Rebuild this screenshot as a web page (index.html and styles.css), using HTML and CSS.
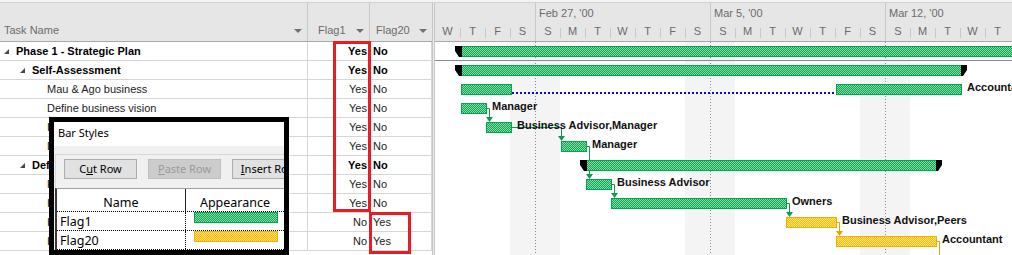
FILE: index.html
```html
<!DOCTYPE html>
<html lang="en">
<head>
  <meta charset="UTF-8" />
  <meta name="viewport" content="width=device-width, initial-scale=1.0"/>
  <title>Gantt Chart - Bar Styles</title>
  <link rel="stylesheet" href="styles.css">
</head>
<body>
  <div class="view">
    <div class="sheet">
      <div class="sheet-head">
        <div class="hcell col-name">Task Name<span class="drop"></span></div>
        <div class="hcell col-flag1">Flag1<span class="drop"></span></div>
        <div class="hcell col-flag20">Flag20<span class="drop"></span></div>
      </div>

      <div class="row bold">
        <div class="cell lvl1"><span class="tri"></span>Phase 1 - Strategic Plan</div>
        <div class="cell flag1">Yes</div>
        <div class="cell flag20">No</div>
      </div>
      <div class="row bold">
        <div class="cell lvl2"><span class="tri"></span>Self-Assessment</div>
        <div class="cell flag1">Yes</div>
        <div class="cell flag20">No</div>
      </div>
      <div class="row">
        <div class="cell lvl3">Mau &amp; Ago business</div>
        <div class="cell flag1">Yes</div>
        <div class="cell flag20">No</div>
      </div>
      <div class="row">
        <div class="cell lvl3">Define business vision</div>
        <div class="cell flag1">Yes</div>
        <div class="cell flag20">No</div>
      </div>
      <div class="row">
        <div class="cell lvl3">Identify available skills, information and support</div>
        <div class="cell flag1">Yes</div>
        <div class="cell flag20">No</div>
      </div>
      <div class="row">
        <div class="cell lvl3">Decide whether to proceed</div>
        <div class="cell flag1">Yes</div>
        <div class="cell flag20">No</div>
      </div>
      <div class="row bold">
        <div class="cell lvl2"><span class="tri"></span>Define the Opportunity</div>
        <div class="cell flag1">Yes</div>
        <div class="cell flag20">No</div>
      </div>
      <div class="row">
        <div class="cell lvl3">Research the market and competition</div>
        <div class="cell flag1">Yes</div>
        <div class="cell flag20">No</div>
      </div>
      <div class="row">
        <div class="cell lvl3">Interview owners of similar businesses</div>
        <div class="cell flag1">Yes</div>
        <div class="cell flag20">No</div>
      </div>
      <div class="row">
        <div class="cell lvl3">Identify needed resources</div>
        <div class="cell flag1">No</div>
        <div class="cell flag20">Yes</div>
      </div>
      <div class="row">
        <div class="cell lvl3">Identify operating cost elements</div>
        <div class="cell flag1">No</div>
        <div class="cell flag20">Yes</div>
      </div>
    </div>

    <div class="splitter"></div>

    <div class="chart">
      <div class="timescale">
        <div class="weeks">
          <div class="week lead"></div>
          <div class="week">Feb 27, '00</div>
          <div class="week">Mar 5, '00</div>
          <div class="week">Mar 12, '00</div>
        </div>
        <div class="days">
          <span class="day first">W</span><span class="day">T</span><span class="day">F</span><span class="day">S</span>
          <span class="day sun">S</span><span class="day">M</span><span class="day">T</span><span class="day">W</span><span class="day">T</span><span class="day">F</span><span class="day">S</span>
          <span class="day sun">S</span><span class="day">M</span><span class="day">T</span><span class="day">W</span><span class="day">T</span><span class="day">F</span><span class="day">S</span>
          <span class="day sun">S</span><span class="day">M</span><span class="day">T</span><span class="day">W</span><span class="day">T</span>
        </div>
      </div>

      <svg class="bars" width="577" height="213" viewBox="435 42 577 213">
        <defs>
          <pattern id="green" width="2" height="2" patternUnits="userSpaceOnUse">
            <rect width="2" height="2" fill="#0fa650"/>
            <rect width="1" height="1" fill="#86dba9"/>
            <rect x="1" y="1" width="1" height="1" fill="#86dba9"/>
          </pattern>
          <pattern id="yellow" width="2" height="2" patternUnits="userSpaceOnUse">
            <rect width="2" height="2" fill="#ffbb00"/>
            <rect width="1" height="1" fill="#ffe07a"/>
            <rect x="1" y="1" width="1" height="1" fill="#ffe07a"/>
          </pattern>
        </defs>

        <!-- non-working days -->
        <rect x="510" y="42" width="50" height="213" fill="#f4f4f4"/>
        <rect x="685" y="42" width="50" height="213" fill="#f4f4f4"/>
        <rect x="860" y="42" width="50" height="213" fill="#f4f4f4"/>
        <g stroke="#8c8c8c" stroke-dasharray="1 2">
          <line x1="535.5" y1="42" x2="535.5" y2="255"/>
          <line x1="710.5" y1="42" x2="710.5" y2="255"/>
          <line x1="885.5" y1="42" x2="885.5" y2="255"/>
        </g>
        <line x1="435" y1="60.5" x2="1012" y2="60.5" stroke="#8a8a8a"/>

        <!-- links -->
        <g fill="none" stroke="#0f9a4e">
          <path d="M486 108.5H489.5V118"/>
          <path d="M511 127.5H561.5V137"/>
          <path d="M586 146.5H589.5V175"/>
          <path d="M611 184.5H614.5V194"/>
          <path d="M786 203.5H789.5V213"/>
        </g>
        <g fill="#0f9a4e">
          <polygon points="486,117 493,117 489.5,122"/>
          <polygon points="558,136 565,136 561.5,141"/>
          <polygon points="586,174 593,174 589.5,179"/>
          <polygon points="611,193 618,193 614.5,198"/>
          <polygon points="786,212 793,212 789.5,217"/>
        </g>
        <g fill="none" stroke="#e3a600">
          <path d="M836 222.5H839.5V232"/>
          <path d="M936 241.5H939.5V255"/>
        </g>
        <polygon points="836,231 843,231 839.5,236" fill="#e3a600"/>

        <!-- bars -->
        <g fill="url(#green)" stroke="#00a651">
          <rect x="461.5" y="46.5" width="560" height="10"/>
          <rect x="461.5" y="65.5" width="500" height="10"/>
          <rect x="461.5" y="84.5" width="50" height="10"/>
          <rect x="836.5" y="84.5" width="125" height="10"/>
          <rect x="461.5" y="103.5" width="25" height="10"/>
          <rect x="486.5" y="122.5" width="25" height="10"/>
          <rect x="561.5" y="141.5" width="25" height="10"/>
          <rect x="586.5" y="160.5" width="350" height="10"/>
          <rect x="586.5" y="179.5" width="25" height="10"/>
          <rect x="611.5" y="198.5" width="175" height="10"/>
        </g>
        <g fill="url(#yellow)" stroke="#f0b000">
          <rect x="786.5" y="217.5" width="50" height="10"/>
          <rect x="836.5" y="236.5" width="100" height="10"/>
        </g>
        <line x1="512" y1="93" x2="836" y2="93" stroke="#0a0ac8" stroke-width="2" stroke-dasharray="2 2"/>

        <!-- summary ends -->
        <g fill="#000">
          <polygon points="455,46 462,46 462,57 459,57 455,51"/>
          <polygon points="455,65 462,65 462,76 459,76 455,70"/>
          <polygon points="961,65 967,65 967,70 963,76 961,76"/>
          <polygon points="580,160 587,160 587,171 584,171 580,165"/>
          <polygon points="936,160 942,160 942,165 938,171 936,171"/>
        </g>

        <!-- resource labels -->
        <g class="label">
          <text x="967" y="91">Accountant</text>
          <text x="492" y="110">Manager</text>
          <text x="517" y="129">Business Advisor,Manager</text>
          <text x="592" y="148">Manager</text>
          <text x="617" y="186">Business Advisor</text>
          <text x="792" y="205">Owners</text>
          <text x="842" y="224">Business Advisor,Peers</text>
          <text x="942" y="243">Accountant</text>
        </g>
      </svg>
    </div>
  </div>

  <!-- Bar Styles dialog (cropped) -->
  <div class="dialog">
    <div class="dlg-title">Bar Styles</div>
    <div class="dlg-body">
      <div class="dlg-tools">
        <button class="btn">C<u>u</u>t Row</button>
        <button class="btn" disabled><u>P</u>aste Row</button>
        <button class="btn"><u>I</u>nsert Row</button>
      </div>
      <div class="dlg-table">
        <div class="dlg-head">
          <div class="dh name">Name</div>
          <div class="dh">Appearance</div>
        </div>
        <div class="dlg-row">
          <div class="dc name">Flag1</div>
          <div class="dc"><span class="swatch green"></span></div>
        </div>
        <div class="dlg-row">
          <div class="dc name">Flag20</div>
          <div class="dc"><span class="swatch yellow"></span></div>
        </div>
      </div>
    </div>
  </div>

  <div class="mark mark-flag1"></div>
  <div class="mark mark-flag20"></div>
</body>
</html>
```

FILE: styles.css
```css
body {
  margin: 0;
  width: 1012px;
  height: 255px;
  overflow: hidden;
  position: relative;
  background: #ffffff;
  font-family: "Liberation Sans", Arial, sans-serif;
  font-size: 11px;
}

.view {
  display: flex;
  height: 253px;
  border-top: 2px solid #f3f3f3;
}

/* ---- task sheet ---- */

.sheet {
  width: 432px;
  flex: none;
}

.sheet-head {
  display: grid;
  grid-template-columns: 308px 62px 62px;
  height: 38px;
  border-top: 1px solid #d2d2d2;
  border-bottom: 1px solid #a9a9a9;
  background: #e6e6e6;
}

.hcell {
  display: flex;
  align-items: flex-end;
  padding-bottom: 4px;
  line-height: 13px;
  color: #6b6b6b;
  border-right: 1px solid #c9c9c9;
}

.sheet-head .col-name { padding-left: 4px; }
.sheet-head .col-flag1 { padding-left: 10px; }
.sheet-head .col-flag20 { padding-left: 6px; border-right: none; }

.drop {
  margin-left: auto;
  margin-right: 5px;
  margin-bottom: 4px;
  width: 0;
  height: 0;
  border-left: 4px solid transparent;
  border-right: 4px solid transparent;
  border-top: 4px solid #707070;
}

.row {
  display: grid;
  grid-template-columns: 308px 62px 62px;
  height: 18px;
  border-bottom: 1px solid #d6d6d6;
}

.cell {
  display: flex;
  align-items: center;
  white-space: nowrap;
  overflow: hidden;
  color: #1b1b1b;
  border-right: 1px solid #d6d6d6;
}

.row.bold .cell { font-weight: bold; color: #000; }

.lvl1 { padding-left: 4px; }
.lvl2 { padding-left: 20px; }
.lvl3 { padding-left: 47px; }

.tri {
  width: 0;
  height: 0;
  margin-right: 7px;
  margin-top: 1px;
  border-left: 5px solid transparent;
  border-bottom: 5px solid #474747;
}

.flag1 { justify-content: flex-end; padding-right: 2px; }
.flag20 { padding-left: 3px; }

.splitter {
  width: 1px;
  flex: none;
  background: #ececec;
  border-left: 1px solid #c6c6c6;
  border-right: 1px solid #c6c6c6;
}

/* ---- gantt chart ---- */

.chart {
  flex: 1;
  overflow: hidden;
}

.timescale {
  height: 38px;
  border-top: 1px solid #d2d2d2;
  border-bottom: 1px solid #a9a9a9;
  background: #e6e6e6;
  color: #6b6b6b;
}

.weeks {
  display: flex;
  height: 18px;
}

.week {
  flex: none;
  width: 175px;
  box-sizing: border-box;
  border-left: 1px solid #c9c9c9;
  padding: 4px 0 0 3px;
  line-height: 13px;
  white-space: nowrap;
}

.week.lead {
  width: 100px;
  border-left: none;
}

.days {
  display: flex;
  height: 20px;
}

.day {
  flex: none;
  width: 25px;
  box-sizing: border-box;
  text-align: center;
  line-height: 20px;
  background: linear-gradient(#c9c9c9, #c9c9c9) 0 7px / 1px 10px no-repeat;
}

.day.first { background: none; }

.day.sun {
  background: none;
  border-left: 1px solid #c9c9c9;
}

.bars {
  display: block;
}

.label text {
  font-family: "Liberation Sans", Arial, sans-serif;
  font-size: 11px;
  font-weight: bold;
  fill: #111111;
}

/* ---- bar styles dialog ---- */

.dialog {
  position: absolute;
  left: 49px;
  top: 117px;
  width: 230px;
  height: 128px;
  border: 5px solid #000;
  background: #f0f0f0;
  overflow: hidden;
  font-family: "Noto Sans", "Open Sans", sans-serif;
}

.dlg-title {
  height: 24px;
  line-height: 22px;
  padding-left: 4px;
  background: #ffffff;
  font-size: 11px;
  color: #000;
}

.dlg-tools {
  display: flex;
  gap: 11px;
  margin: 8px 0 0 1px;
  padding: 4px 0 9px 8px;
  border-top: 1px solid #d9d9d9;
  border-left: 1px solid #d9d9d9;
  white-space: nowrap;
}

.btn {
  flex: none;
  width: 73px;
  height: 20px;
  padding: 0;
  background: #e1e1e1;
  border: 1px solid #adadad;
  font-family: "Noto Sans", "Open Sans", sans-serif;
  font-size: 11px;
  line-height: 16px;
  color: #000;
  text-align: center;
}

.btn:disabled {
  background: #cccccc;
  border-color: #bfbfbf;
  color: #9a9a9a;
}

.dlg-table {
  margin-left: 1px;
  border-left: 2px solid #3a3a3a;
  border-top: 1px solid #a0a0a0;
  background: #ffffff;
}

.dlg-head,
.dlg-row {
  display: grid;
  grid-template-columns: 129px 1fr;
}

.dlg-head {
  height: 22px;
  border-bottom: 1px dotted #000;
}

.dh {
  display: flex;
  align-items: flex-end;
  justify-content: center;
  font-size: 12.5px;
  line-height: 17px;
  color: #000;
}

.dh.name { border-right: 1px solid #222; }

.dlg-row {
  height: 18px;
  border-bottom: 1px dotted #000;
}

.dc {
  font-size: 12.5px;
  line-height: 19px;
  color: #000;
}

.dc.name {
  padding-left: 3px;
  border-right: 1px dotted #000;
  overflow: hidden;
}

.dc:not(.name) { padding-left: 8px; }

.swatch {
  display: block;
  width: 82px;
  height: 9px;
  margin-top: 0;
  border: 1px solid #00a651;
  background: repeating-conic-gradient(#0fa650 0 25%, #86dba9 0 50%) 0 0 / 2px 2px;
}

.swatch.yellow {
  border-color: #f0b000;
  background: repeating-conic-gradient(#ffbb00 0 25%, #ffe07a 0 50%) 0 0 / 2px 2px;
}

/* ---- highlight boxes ---- */

.mark {
  position: absolute;
  border: 3px solid #e81c25;
  box-sizing: border-box;
}

.mark-flag1 {
  left: 333px;
  top: 41px;
  width: 38px;
  height: 171px;
}

.mark-flag20 {
  left: 369px;
  top: 212px;
  width: 42px;
  height: 42px;
}
```
